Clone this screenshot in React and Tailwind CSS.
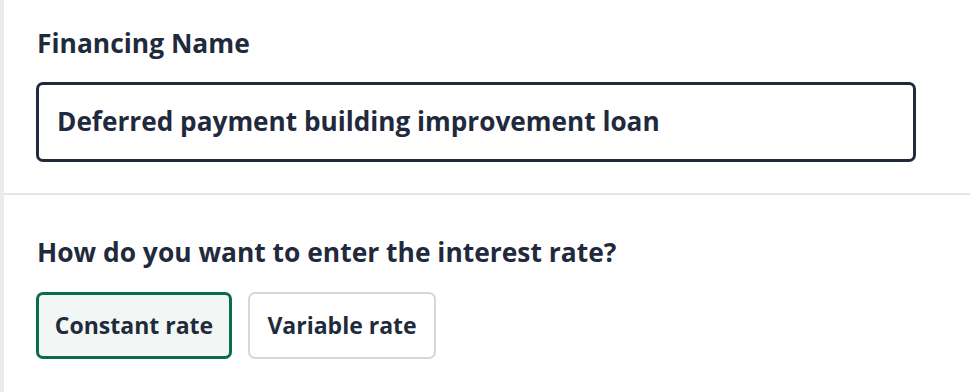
export default function App() {
  return (
    <div className="flex w-[970px] h-[392px] bg-white text-[#1f2a3c]" style={{ fontFamily: "'Open Sans', 'Noto Sans', sans-serif" }}>
      <div className="w-[4px] shrink-0 bg-[#ebeded]" />
      <div className="flex flex-1 flex-col">
        <div className="flex h-[193px] flex-col pl-[32px] pt-[26px]">
          <div className="text-[26.4px] font-bold leading-[34px] pl-[1px]">Financing Name</div>
          <div className="mt-[22px] flex h-[80px] w-[880px] items-center rounded-[7px] border-[3px] border-[#1f2a3c] px-[18px] text-[26.2px] font-bold">
            Deferred payment building improvement loan
          </div>
        </div>
        <div className="h-[2px] bg-[#e6e6e6]" />
        <div className="flex flex-col pl-[32px] pt-[40px]">
          <div className="text-[26.4px] font-bold leading-[34px] pl-[1px]">How do you want to enter the interest rate?</div>
          <div className="mt-[23px] flex gap-[16px]">
            <button className="flex h-[67px] w-[196px] items-center justify-center rounded-[7px] border-[3px] border-[#0b6b4e] bg-[#f2f7f5] text-[23px] font-bold">
              Constant rate
            </button>
            <button className="flex h-[67px] w-[188px] items-center justify-center rounded-[7px] border-2 border-[#d6d6db] bg-white text-[23px] font-bold">
              Variable rate
            </button>
          </div>
        </div>
      </div>
    </div>
  );
}
